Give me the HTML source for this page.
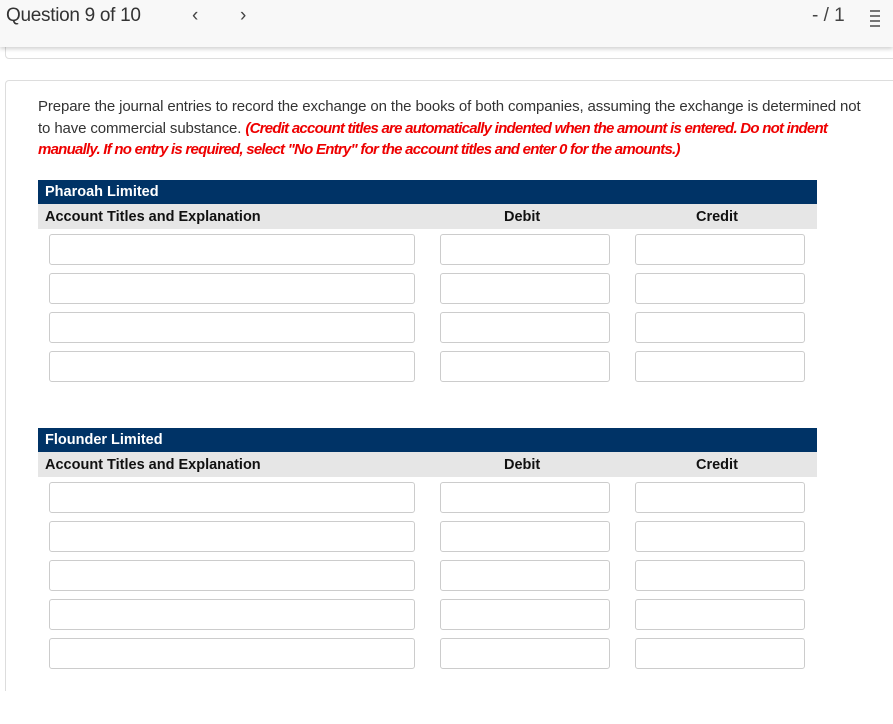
<!DOCTYPE html>
<html><head><style>
body{margin:0;width:893px;height:724px;background:#fff;font-family:"Liberation Sans",sans-serif;position:relative;overflow:hidden}
.top{position:absolute;left:0;top:0;width:893px;height:47px;background:#f8f8f8;box-shadow:0 2px 4px rgba(0,0,0,.18);z-index:2}
.q{position:absolute;left:6px;top:5px;font-size:19px;color:#333;letter-spacing:-0.3px}
.nav{position:absolute;top:5px;font-size:19px;color:#444}
.card1{position:absolute;left:5px;top:30px;width:900px;height:27px;border:1px solid #ddd;border-radius:4px}
.card2{position:absolute;left:5px;top:80px;width:900px;height:610px;border:1px solid #ddd;border-bottom:none;border-radius:4px 4px 0 0}
p{position:absolute;left:38px;top:96px;margin:0;font-size:15px;line-height:21.5px;color:#333;white-space:nowrap;letter-spacing:-0.12px}
p b{color:#e00;font-style:italic;letter-spacing:-0.75px}
.hd{position:absolute;left:38px;width:779px;height:24px;background:#003366;color:#fff;font-weight:bold;font-size:14.5px;line-height:24px;padding-left:7px;box-sizing:border-box}
.gr{position:absolute;left:38px;width:779px;height:25px;background:#e6e6e6;font-weight:bold;font-size:14.5px;line-height:27px;color:#111}
.gr span{position:absolute}
.in{position:absolute;height:31px;border:1px solid #ccc;border-radius:3px;box-sizing:border-box;background:#fff}
</style></head><body>
<div class="top"><div class="q">Question 9 of 10</div><div class="nav" style="left:192px">&#8249;</div><div class="nav" style="left:240px">&#8250;</div>
<div class="nav" style="left:812px;top:5px;font-size:19px">- / 1</div>
<div style="position:absolute;left:866px;top:8px;width:14px">
<div style="height:2px;background:#777;margin:2px 0 3px 4px"></div><div style="height:2px;background:#777;margin:0 0 3px 4px"></div><div style="height:2px;background:#777;margin:0 0 3px 4px"></div><div style="height:2px;background:#777;margin:0 0 3px 4px"></div></div></div>
<div class="card1"></div>
<div class="card2"></div>
<p>Prepare the journal entries to record the exchange on the books of both companies, assuming the exchange is determined not<br>to have commercial substance. <b>(Credit account titles are automatically indented when the amount is entered. Do not indent<br>manually. If no entry is required, select "No Entry" for the account titles and enter 0 for the amounts.)</b></p>
<div class="hd" style="top:180px">Pharoah Limited</div>
<div class="gr" style="top:204px"><span style="left:7px">Account Titles and Explanation</span><span style="left:466px">Debit</span><span style="left:658px">Credit</span></div>
<div class="hd" style="top:428px">Flounder Limited</div>
<div class="gr" style="top:452px"><span style="left:7px">Account Titles and Explanation</span><span style="left:466px">Debit</span><span style="left:658px">Credit</span></div>
<div id="r"></div>
<script>
var h='';[234,273,312,351,482,521,560,599,638].forEach(function(y){
h+='<div class="in" style="left:49px;top:'+y+'px;width:366px"></div><div class="in" style="left:440px;top:'+y+'px;width:170px"></div><div class="in" style="left:635px;top:'+y+'px;width:170px"></div>';});
document.getElementById('r').innerHTML=h;
</script>
</body></html>
